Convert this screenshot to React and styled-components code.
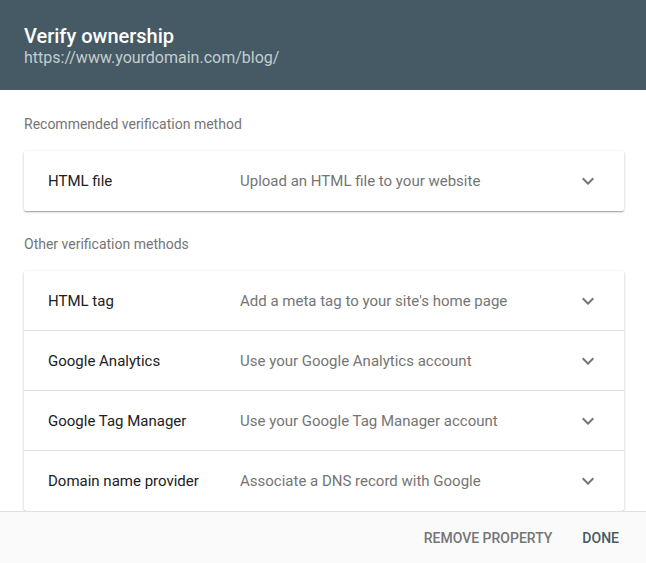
import React from 'react';
import styled, { createGlobalStyle } from 'styled-components';

const GlobalStyle = createGlobalStyle`
  html, body {
    margin: 0;
    padding: 0;
    background: #ffffff;
    font-family: Roboto, "Liberation Sans", Arial, sans-serif;
  }
  * { box-sizing: border-box; }
`;

// Whole dialog fills the window
const Dialog = styled.div`
  display: flex;
  flex-direction: column;
  height: 100vh;
  background: #ffffff;
`;

const Header = styled.header`
  flex: 0 0 90px;
  background: #455a64;
  padding: 24px 24px 0;
`;

const Title = styled.h1`
  margin: 0;
  font-size: 20px;
  line-height: 24px;
  font-weight: 500;
  color: #ffffff;
`;

const Url = styled.div`
  font-size: 16px;
  line-height: 20px;
  color: rgba(255, 255, 255, 0.7);
`;

const Body = styled.main`
  flex: 1;
  overflow: hidden;
  padding: 0 22px 0 24px;
`;

const SectionLabel = styled.div`
  font-size: 14px;
  line-height: 20px;
  color: #757575;
  padding: ${props => (props.$first ? '24px 0 17px' : '23px 0 17px')};
`;

const Card = styled.div`
  background: #ffffff;
  border-radius: 2px;
  box-shadow: 0 1px 3px rgba(0, 0, 0, 0.2), 0 1px 1px rgba(0, 0, 0, 0.14),
    0 2px 1px -1px rgba(0, 0, 0, 0.12);
`;

// Each row is 60px; the divider sits inside the bottom of the row
const Row = styled.div`
  display: flex;
  align-items: center;
  height: 60px;
  padding: 0 24px;
  border-bottom: ${props => (props.$divider ? '1px solid #e0e0e0' : 'none')};
`;

const Name = styled.div`
  flex: 0 0 192px;
  font-size: 15px;
  color: #212121;
`;

const Description = styled.div`
  flex: 1;
  font-size: 15px;
  color: #757575;
`;

const Chevron = styled.svg`
  width: 24px;
  height: 24px;
  fill: #757575;
  flex: 0 0 24px;
`;

const Footer = styled.footer`
  flex: 0 0 52px;
  display: flex;
  align-items: center;
  justify-content: flex-end;
  gap: 14px;
  padding: 0 19px 0 24px;
  background: #fafafa;
  border-top: 1px solid #e0e0e0;
`;

const FooterButton = styled.button`
  border: none;
  background: transparent;
  padding: 8px;
  font-family: inherit;
  font-size: 14px;
  font-weight: 500;
  text-transform: uppercase;
  color: ${props => (props.$primary ? '#455a64' : '#757575')};
  cursor: pointer;
`;

const recommended = [
  { name: 'HTML file', desc: 'Upload an HTML file to your website' },
];

const others = [
  { name: 'HTML tag', desc: "Add a meta tag to your site's home page" },
  { name: 'Google Analytics', desc: 'Use your Google Analytics account' },
  { name: 'Google Tag Manager', desc: 'Use your Google Tag Manager account' },
  { name: 'Domain name provider', desc: 'Associate a DNS record with Google' },
];

function MethodRow({ name, desc, divider }) {
  return (
    <Row $divider={divider}>
      <Name>{name}</Name>
      <Description>{desc}</Description>
      <Chevron viewBox="0 0 24 24">
        <path d="M16.59 8.59L12 13.17 7.41 8.59 6 10l6 6 6-6z" />
      </Chevron>
    </Row>
  );
}

export default function App() {
  return (
    <>
      <GlobalStyle />
      <Dialog>
        <Header>
          <Title>Verify ownership</Title>
          <Url>https://www.yourdomain.com/blog/</Url>
        </Header>
        <Body>
          <SectionLabel $first>Recommended verification method</SectionLabel>
          <Card>
            {recommended.map((m, i) => (
              <MethodRow key={m.name} {...m} divider={i < recommended.length - 1} />
            ))}
          </Card>
          <SectionLabel>Other verification methods</SectionLabel>
          <Card>
            {others.map((m, i) => (
              <MethodRow key={m.name} {...m} divider={i < others.length - 1} />
            ))}
          </Card>
        </Body>
        <Footer>
          <FooterButton>Remove property</FooterButton>
          <FooterButton $primary>Done</FooterButton>
        </Footer>
      </Dialog>
    </>
  );
}
